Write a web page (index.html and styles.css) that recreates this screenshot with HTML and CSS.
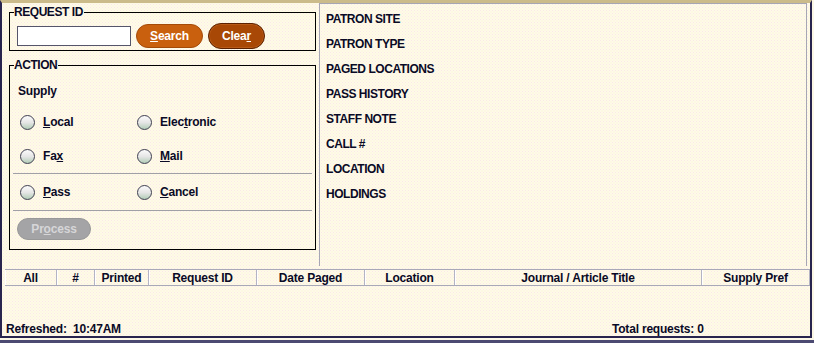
FILE: index.html
```html
<!DOCTYPE html>
<html>
<head>
<meta charset="utf-8">
<link rel="stylesheet" href="styles.css">
</head>
<body>
<div class="screen">
  <div class="window">
    <div class="top">
      <div class="left">
        <fieldset class="box req">
          <legend>REQUEST ID</legend>
          <div class="req-row">
            <input class="field" type="text">
            <button class="btn btn-search"><u>S</u>earch</button>
            <button class="btn btn-clear">Clea<u>r</u></button>
          </div>
        </fieldset>
        <fieldset class="box action">
          <legend>ACTION</legend>
          <div class="supply">Supply</div>
          <div class="radio-row first">
            <label class="opt"><span class="radio"></span><span><u>L</u>ocal</span></label>
            <label class="opt"><span class="radio"></span><span>Elec<u>t</u>ronic</span></label>
          </div>
          <div class="radio-row">
            <label class="opt"><span class="radio"></span><span>Fa<u>x</u></span></label>
            <label class="opt"><span class="radio"></span><span><u>M</u>ail</span></label>
          </div>
          <div class="sep"></div>
          <div class="radio-row tall">
            <label class="opt"><span class="radio"></span><span><u>P</u>ass</span></label>
            <label class="opt"><span class="radio"></span><span><u>C</u>ancel</span></label>
          </div>
          <div class="sep"></div>
          <div class="proc-row">
            <button class="btn btn-process" disabled>Pr<u>o</u>cess</button>
          </div>
        </fieldset>
      </div>
      <div class="right">
        <div class="info">PATRON SITE</div>
        <div class="info">PATRON TYPE</div>
        <div class="info">PAGED LOCATIONS</div>
        <div class="info">PASS HISTORY</div>
        <div class="info">STAFF NOTE</div>
        <div class="info">CALL #</div>
        <div class="info">LOCATION</div>
        <div class="info">HOLDINGS</div>
      </div>
    </div>
    <div class="grid">
      <div class="thead">
        <div class="th">All</div>
        <div class="th">#</div>
        <div class="th">Printed</div>
        <div class="th">Request ID</div>
        <div class="th">Date Paged</div>
        <div class="th">Location</div>
        <div class="th">Journal / Article Title</div>
        <div class="th">Supply Pref</div>
      </div>
      <div class="tbody"></div>
      <div class="status">
        <div class="refreshed">Refreshed:&nbsp; 10:47AM</div>
        <div class="total">Total requests: 0</div>
      </div>
    </div>
  </div>
</div>
</body>
</html>
```

FILE: styles.css
```css
* { box-sizing: border-box; }

html, body {
  margin: 0;
  padding: 0;
  background: #f4f0e2;
}

body {
  font-family: "Liberation Sans", Arial, sans-serif;
  font-size: 12px;
  font-weight: bold;
  color: #0a0a26;
  letter-spacing: -0.2px;
}

.screen {
  width: 814px;
  height: 343px;
  padding-bottom: 5px;
  border-bottom: 3px solid #4c4a72;
  background: #fbf7e6;
  overflow: hidden;
}

.window {
  width: 812px;
  height: 338px;
  border-top: 3px solid #cbbb8a;
  border-left: 2px solid #28244e;
  border-right: 2px solid #28244e;
  border-bottom: 2px solid #28244e;
  background-color: #fefae9;
  background-image:
    radial-gradient(circle, rgba(245, 200, 225, 0.35) 0.6px, transparent 0.9px),
    radial-gradient(circle, rgba(240, 228, 165, 0.35) 0.6px, transparent 0.9px);
  background-size: 3px 3px, 3px 3px;
  background-position: 0 0, 1.5px 1.5px;
  display: flex;
  flex-direction: column;
}

.top {
  height: 263px;
  display: flex;
}

.left {
  width: 317px;
  padding: 2px 0 0 7px;
}

.box {
  margin: 0;
  width: 307px;
  border: 1px solid #000;
  padding: 0 3px;
  min-width: 0;
}

.box legend {
  padding: 0 1px 0 0;
  margin-left: 1px;
  line-height: 14px;
  letter-spacing: -0.45px;
  color: #0a0a26;
}

.req {
  padding-bottom: 1px;
}

.req-row {
  display: flex;
  align-items: center;
  padding: 4px 0 0 4px;
  height: 30px;
}

.field {
  width: 114px;
  height: 20px;
  border: 1px solid #55556a;
  background: #fff;
  margin: 0 5px 0 0;
  padding: 0;
}

.btn {
  font-family: "Liberation Sans", Arial, sans-serif;
  font-size: 12px;
  font-weight: bold;
  letter-spacing: -0.2px;
  color: #fff;
  border-radius: 13px;
  padding: 0;
  margin: 0;
  text-align: center;
}

.btn u {
  text-underline-offset: 1px;
}

.btn-search {
  width: 67px;
  height: 24px;
  background: #c9600e;
  border: 1px solid #a44a08;
  margin-right: 5px;
}

.btn-clear {
  width: 57px;
  height: 26px;
  background: #a84806;
  border: 1px solid #5c2200;
  box-shadow: inset 0 0 0 1px #b85a18;
}

.action {
  margin-top: 7px;
  padding-bottom: 9px;
}

.supply {
  margin-top: 12px;
  padding-left: 5px;
  line-height: 14px;
}

.radio-row {
  display: grid;
  grid-template-columns: 117px 1fr;
  align-items: center;
  height: 34px;
  padding-left: 7px;
}

.radio-row.first {
  margin-top: 7px;
}

.radio-row.tall {
  height: 36px;
}

.opt {
  display: flex;
  align-items: center;
  gap: 8px;
}

.opt u {
  text-underline-offset: 1px;
}

.radio {
  width: 15px;
  height: 15px;
  border-radius: 50%;
  border: 1px solid #3e3e50;
  background: linear-gradient(#fbfbfb, #e6e6e6 50%, #b2cdb7);
}

.sep {
  height: 1px;
  background: #a0a0a6;
}

.proc-row {
  padding: 7px 0 0 4px;
}

.btn-process {
  width: 74px;
  height: 22px;
  background: #a4a4a6;
  border: 1px solid #989898;
  color: #d6d6d8;
}

.right {
  flex: 1;
  margin-right: 3px;
  border-top: 1px solid #a6a6b4;
  border-left: 1px solid #a6a6b4;
  border-right: 1px solid #a6a6b4;
  padding: 3px 0 0 6px;
}

.info {
  line-height: 25px;
  height: 25px;
  letter-spacing: -0.45px;
}

.grid {
  flex: 1;
  display: flex;
  flex-direction: column;
  padding: 3px 0 0 3px;
}

.thead {
  display: grid;
  grid-template-columns: 52px 38px 54px 108px 108px 90px 247px 108px;
  border-top: 1px solid #a8a8b8;
  border-bottom: 1px solid #a8a8b8;
}

.th {
  text-align: center;
  line-height: 14px;
  padding-top: 1px;
  border-right: 1px solid #b4b4c4;
  box-shadow: inset 1px 0 0 #ffffff;
}

.tbody {
  flex: 1;
}

.status {
  display: flex;
  line-height: 14px;
  height: 14px;
  padding-left: 1px;
}

.refreshed {
  width: 606px;
}
```
